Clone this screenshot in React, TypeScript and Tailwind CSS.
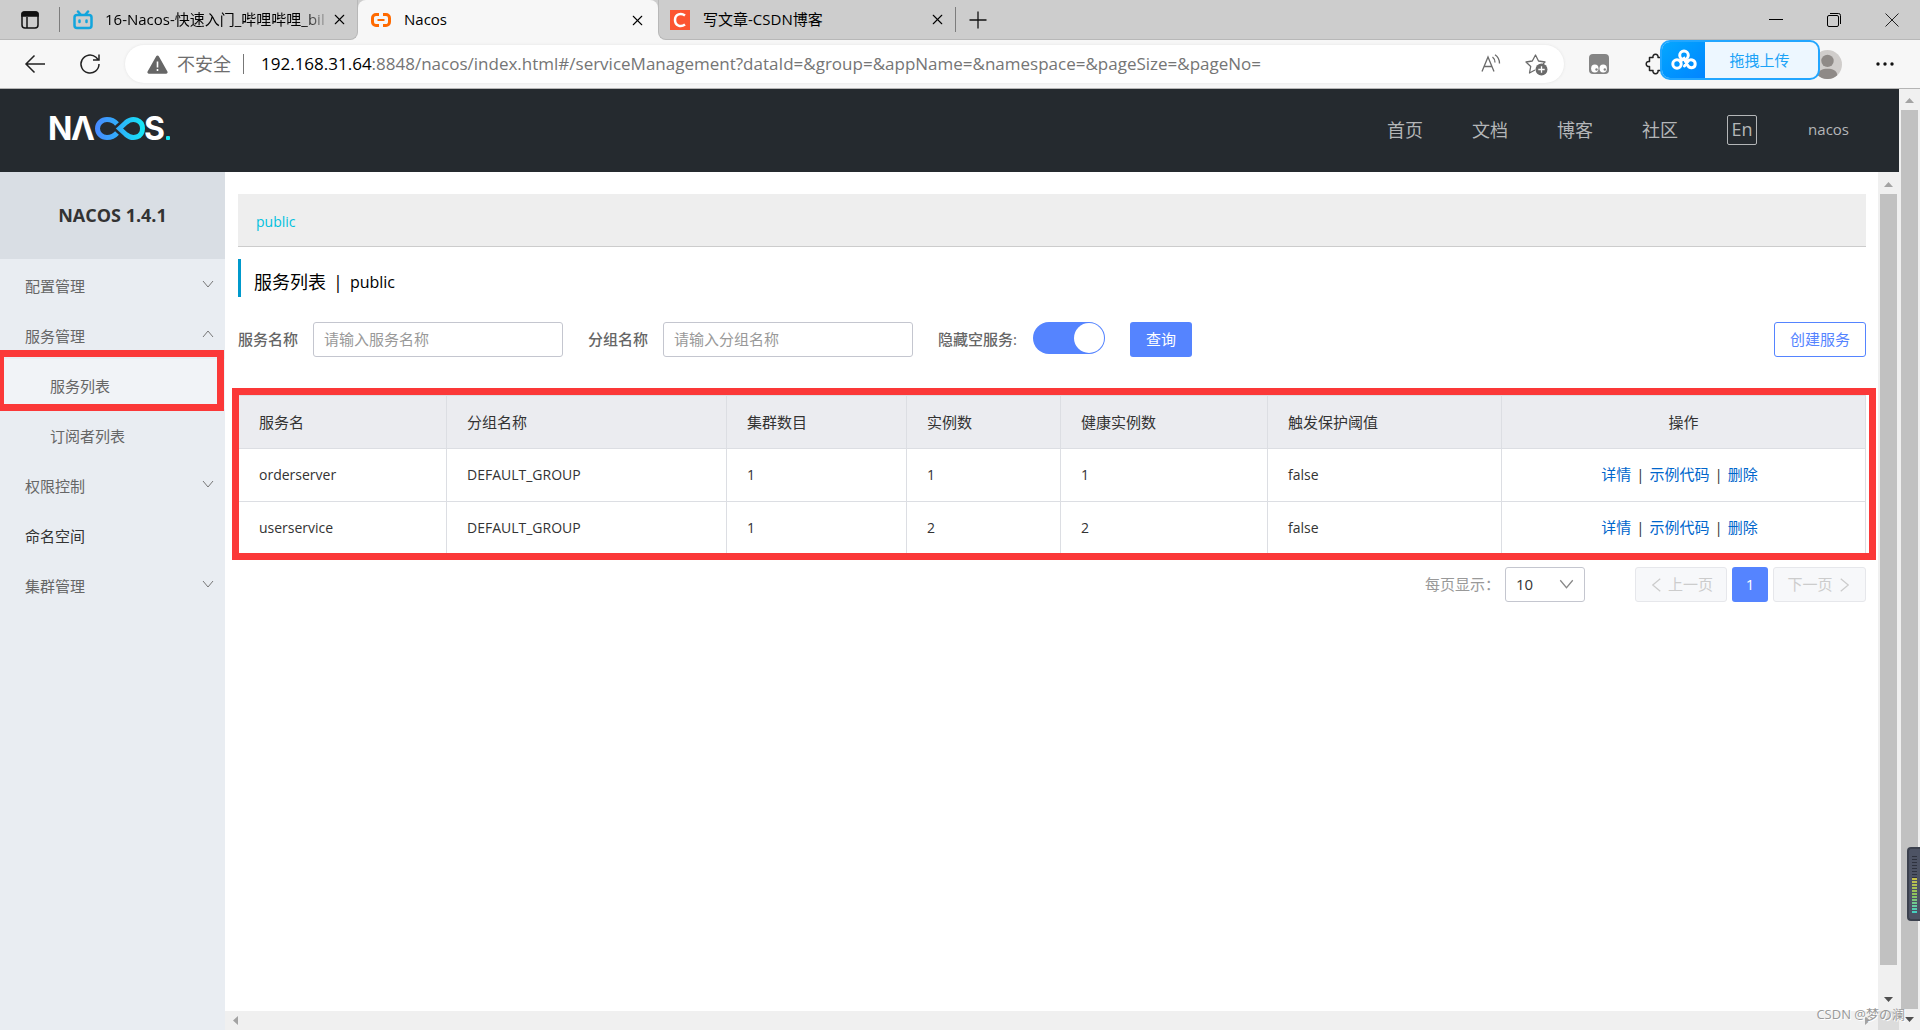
import React, { useState } from "react";
import { LuX } from "react-icons/lu";

const navLinks = ["首页", "文档", "博客", "社区"];

const menu = [
  { label: "配置管理", arrow: "down" },
  { label: "服务管理", arrow: "up" },
  { label: "服务列表", child: true, active: true },
  { label: "订阅者列表", child: true },
  { label: "权限控制", arrow: "down" },
  { label: "命名空间", dark: true },
  { label: "集群管理", arrow: "down" },
];

const services = [
  { name: "orderserver", group: "DEFAULT_GROUP", clusters: 1, instances: 1, healthy: 1, protect: "false" },
  { name: "userservice", group: "DEFAULT_GROUP", clusters: 1, instances: 2, healthy: 2, protect: "false" },
];

const columns = [
  { title: "服务名", width: "w-[208px]" },
  { title: "分组名称", width: "w-[280px]" },
  { title: "集群数目", width: "w-[180px]" },
  { title: "实例数", width: "w-[154px]" },
  { title: "健康实例数", width: "w-[207px]" },
  { title: "触发保护阈值", width: "w-[234px]" },
  { title: "操作", width: "" },
];

const Chevron = ({ className = "" }: { className?: string }) => (
  <svg viewBox="0 0 12 8" className={className} fill="none" stroke="currentColor" strokeWidth="1">
    <path d="M1 1 6 7 11 1" />
  </svg>
);

const Triangle = ({ className = "" }: { className?: string }) => (
  <svg viewBox="0 0 9 5" className={`h-[5px] w-[9px] ${className}`} fill="currentColor">
    <path d="M0 5 4.500 0 9 5z" />
  </svg>
);

const NacosLogo = () => (
  <svg width="122" height="26" viewBox="0 0 122 26" className="overflow-visible" aria-label="NACOS">
    <defs>
      <linearGradient id="loop" gradientUnits="userSpaceOnUse" x1="44" y1="0" x2="94" y2="0">
        <stop offset="0" stopColor="#4a86ff" />
        <stop offset="0.5" stopColor="#2fb0fb" />
        <stop offset="1" stopColor="#14e6f5" />
      </linearGradient>
    </defs>
    <g fill="#fff" fontFamily="Inter, sans-serif" fontWeight="700" fontSize="32">
      <text x="-2" y="24">N</text>
      <text x="21" y="24">Λ</text>
      <text x="94" y="24">S</text>
    </g>
    <g fill="none" stroke="url(#loop)" strokeWidth="5">
      <path d="M67 8C64 4.500 60 3.500 57 3.500A9.500 9 0 0 0 57 21.500C60 21.500 64 20.500 67 17" />
      <path d="M69.500 12.500 76 6.500C83 .5 92.500 4 92.500 12.500S83 24.500 76 18.500z" />
    </g>
    <rect x="116" y="20" width="4" height="4" rx="1" fill="#14e6f5" />
  </svg>
);

const BrowserTabs = () => (
  <div className="flex h-10 shrink-0 bg-[#f7f7f7] text-[15px] text-black">
    <div className="flex w-[358px] items-center rounded-br-lg border-r border-b border-[#b8b8b8] bg-[#cdcdcd] pl-[21px]">
      <button aria-label="Tab actions">
        <svg width="18" height="18" viewBox="0 0 18 18" fill="none" stroke="#111" strokeWidth="1.500">
          <rect x="1" y="1" width="16" height="16" rx="3" />
          <path d="M1 3a2 2 0 0 1 2-2h12a2 2 0 0 1 2 2v2H1z" fill="#111" />
          <path d="M6 6v11" />
        </svg>
      </button>
      <span className="ml-5 h-[25px] w-px bg-[#7d7d7d]" />
      <svg className="ml-[13px] shrink-0" width="20" height="20" viewBox="0 0 20 20" fill="none" stroke="#12a5dd" strokeWidth="2.500" strokeLinecap="round">
        <rect x="1.500" y="5" width="17" height="13" rx="2.500" />
        <path d="m5 1.500 2.500 3M15 1.500l-2.500 3M6.500 10.500v1.500M13.500 10.500v1.500" />
      </svg>
      <span className="ml-3 flex-1 whitespace-nowrap [mask-image:linear-gradient(to_right,#000_88%,transparent)]">
        16-Nacos-快速入门_哔哩哔哩_bil
      </span>
      <button aria-label="Close tab" className="mr-[9px]">
        <LuX size={17} strokeWidth={1.5} />
      </button>
    </div>
    <div className="w-[300px] bg-[#cdcdcd]">
      <div className="flex h-full items-center rounded-t-lg bg-[#f7f7f7] pr-3 pl-[13px]">
        <svg width="20" height="14" viewBox="0 0 20 14" fill="none" stroke="#ff6a00" strokeWidth="3">
          <path d="M8 1.500H5A3.500 3.500 0 0 0 1.500 5v4A3.500 3.500 0 0 0 5 12.500h3M12 1.500h3A3.500 3.500 0 0 1 18.500 5v4a3.500 3.500 0 0 1-3.500 3.500h-3" />
          <path d="M6.500 7h7" strokeWidth="2" />
        </svg>
        <span className="ml-[13px] flex-1 pb-px">Nacos</span>
        <button aria-label="Close tab">
          <LuX size={17} strokeWidth={1.5} />
        </button>
      </div>
    </div>
    <div className="flex flex-1 items-center rounded-bl-lg border-b border-l border-[#b8b8b8] bg-[#cdcdcd] pl-[11px]">
      <svg width="20" height="20" viewBox="0 0 20 20">
        <path d="M0 0h20v20H0z" fill="#fc5531" />
        <path d="M15 5.500C11 2.500 5 4 5 10s6 7.500 10 4.500" fill="none" stroke="#fff" strokeWidth="2.500" />
      </svg>
      <span className="ml-[13px] w-[226px]">写文章-CSDN博客</span>
      <button aria-label="Close tab">
        <LuX size={17} strokeWidth={1.5} />
      </button>
      <span className="ml-[9px] h-[25px] w-px bg-[#7d7d7d]" />
      <button aria-label="New tab" className="ml-3">
        <svg width="20" height="20" viewBox="0 0 20 20" stroke="#111" strokeWidth="1.300">
          <path d="M10 1.500v17M1.500 10h17" />
        </svg>
      </button>
      <div className="ml-auto flex items-center gap-11 pr-[21px]">
        <button aria-label="Minimize">
          <svg width="14" height="14" viewBox="0 0 14 14" stroke="#000">
            <path d="M0 6.500h14" />
          </svg>
        </button>
        <button aria-label="Restore">
          <svg width="14" height="14" viewBox="0 0 14 14" fill="none" stroke="#000">
            <rect x=".5" y="2.500" width="11" height="11" rx="1.500" />
            <path d="M3 .5h8.500a2 2 0 0 1 2 2V11" />
          </svg>
        </button>
        <button aria-label="Close">
          <svg width="14" height="14" viewBox="0 0 14 14" stroke="#222">
            <path d="m.5.5 13 13M13.500.5l-13 13" />
          </svg>
        </button>
      </div>
    </div>
  </div>
);

const UploadBadge = () => (
  <button className="absolute top-0 right-[100px] flex h-10 w-40 overflow-hidden rounded-[10px] border-2 border-[#22a6ff] bg-[#edf7ff] text-[15px] text-[#1ba3f7]">
    <span className="flex h-full w-[43px] items-center justify-center bg-linear-to-br from-[#06a7ff] to-[#0484ff] pb-px">
      <svg width="26" height="22" viewBox="0 0 26 22" fill="none" stroke="#fff" strokeWidth="3" strokeLinecap="round">
        <circle cx="13" cy="6.300" r="4.300" />
        <circle cx="6" cy="15" r="4.200" />
        <path d="M9.200 12.300 13 9.500l3.500 6.500c1.300 3.500 7.700 4 7.700-1 0-4.500-5.500-5.500-7.700-2.200L13.500 17" />
      </svg>
    </span>
    <span className="flex h-full flex-1 items-center justify-center pr-1">拖拽上传</span>
  </button>
);

const AddressBar = () => (
  <div className="relative flex h-[49px] shrink-0 items-center border-b border-[#b5b5b5] bg-[#f7f7f7] pl-6">
    <button aria-label="Back">
      <svg width="22" height="20" viewBox="0 0 22 20" fill="none" stroke="#222" strokeWidth="1.500">
        <path d="M21 10H2M10.500 1.500 2 10l8.500 8.500" />
      </svg>
    </button>
    <button aria-label="Refresh" className="ml-[33px]">
      <svg width="22" height="22" viewBox="0 0 22 22" fill="none" stroke="#222" strokeWidth="1.500">
        <path d="M20 11a9 9 0 1 1-3-6.700L19.500 7M20 1.500V7h-6" />
      </svg>
    </button>
    <div className="ml-6 flex h-[38px] flex-1 items-center rounded-full bg-white pr-4 pl-[22px] text-[17px] shadow-[0_0_3px_#e2e2e2]">
      <svg width="21" height="19" viewBox="0 0 21 19">
        <path d="M9.200 1.200a1.500 1.500 0 0 1 2.600 0l8.600 15.300a1.500 1.500 0 0 1-1.300 2.200H1.900A1.500 1.500 0 0 1 .6 16.500z" fill="#666" />
        <path d="M10.500 6.500v6M10.500 14v2" stroke="#fff" strokeWidth="1.600" />
      </svg>
      <span className="ml-[9px] text-lg text-[#6e6e6e]">不安全</span>
      <span className="ml-3 h-5 w-px bg-[#777]" />
      <span className="ml-[17px] flex-1 whitespace-nowrap text-[#757575]">
        <span className="text-black">192.168.31.64</span>
        :8848/nacos/index.html#/serviceManagement?dataId=&amp;group=&amp;appName=&amp;namespace=&amp;pageSize=&amp;pageNo=
      </span>
      <button aria-label="Read aloud">
        <svg width="20" height="20" viewBox="0 0 20 20" fill="none" stroke="#6b6b6b" strokeWidth="1.300">
          <path d="M1 17.500 7 3l6 14.500M3.200 12.500h7.600M11.500 3c1.700 1.300 2.500 3 2.500 5.500M14 .8c3 2 4.500 5 4.500 8.700" />
        </svg>
      </button>
      <button aria-label="Add to favorites" className="ml-6">
        <svg width="23" height="23" viewBox="0 0 23 23" fill="none" stroke="#6b6b6b" strokeWidth="1.300" strokeLinejoin="round">
          <path d="m10 17-5.500 3 1.200-6.500L1 9l6.300-1L10.500 2l3 6 6.500 1-2 2" />
          <circle cx="16.500" cy="16.500" r="6" fill="#6b6b6b" stroke="none" />
          <path d="M16.500 13.300v6.400M13.300 16.500h6.400" stroke="#fff" />
        </svg>
      </button>
    </div>
    <div className="flex w-[356px] items-center pr-[26px] pl-[25px]">
      <button aria-label="Extension">
        <svg width="20" height="20" viewBox="0 0 20 20">
          <rect width="20" height="20" rx="4" fill="#858585" />
          <ellipse cx="5.800" cy="14.500" rx="3.700" ry="4" fill="#fff" />
          <ellipse cx="14.200" cy="14.500" rx="3.700" ry="4" fill="#fff" />
          <circle cx="7.500" cy="15.500" r="1.200" fill="#858585" />
          <circle cx="15.800" cy="15.500" r="1.200" fill="#858585" />
        </svg>
      </button>
      <button aria-label="Extensions" className="ml-9">
        <svg width="22" height="22" viewBox="0 0 22 22" fill="none" stroke="#222" strokeWidth="1.500" strokeLinejoin="round">
          <path d="M4.500 4.500H8a2.600 2.600 0 1 1 5 0h4.500V9a2.300 2.300 0 0 0 0 4.500v4H13a2.600 2.600 0 1 1-5 0H4.500V13.500a2.600 2.600 0 1 1 0-5z" />
        </svg>
      </button>
      <svg className="ml-auto" width="29" height="29" viewBox="0 0 28 28">
        <circle cx="14" cy="14" r="14" fill="#d0cdcb" />
        <circle cx="14" cy="10.500" r="6" fill="#8f8a87" />
        <path d="M4.500 24.300C5 19.500 9 18 14 18s9 1.500 9.500 6.300A14 14 0 0 1 4.500 24.300z" fill="#8f8a87" />
      </svg>
      <button aria-label="Settings and more" className="ml-[34px]">
        <svg width="18" height="4" viewBox="0 0 18 4" fill="#111">
          <circle cx="2" cy="2" r="1.700" />
          <circle cx="9" cy="2" r="1.700" />
          <circle cx="16" cy="2" r="1.700" />
        </svg>
      </button>
    </div>
    <UploadBadge />
  </div>
);

const Header = () => (
  <header className="flex h-[83px] shrink-0 items-center justify-between bg-[#252a2f] px-[50px] pb-0.5 text-[#b4b6b8]">
    <a href="#" className="pb-0.5">
      <NacosLogo />
    </a>
    <nav className="flex items-center gap-[49px] text-lg">
      {navLinks.map((link) => (
        <a key={link} href="#">
          {link}
        </a>
      ))}
      <button className="flex size-[30px] items-center justify-center rounded-xs border border-[#b4b6b8] pb-0.5">
        En
      </button>
      <a href="#" className="pl-0.5 text-[15px]">
        nacos
      </a>
    </nav>
  </header>
);

const Sidebar = () => (
  <aside className="w-[225px] shrink-0 bg-[#e9edf2] text-[15px]">
    <h1 className="flex h-[87px] items-center justify-center bg-[#d9dee4] pb-0.5 text-lg font-bold text-[#333]">
      NACOS 1.4.1
    </h1>
    <nav>
      {menu.map((item) => (
        <a
          key={item.label}
          href="#"
          className={`relative flex h-[50px] items-center justify-between pt-1 pr-[11px] ${item.child ? "pl-[50px]" : "pl-[25px]"} ${
            item.active ? "bg-[#f1f3f7]" : ""
          } ${item.dark ? "text-[#333]" : "text-[#666]"}`}
        >
          {item.label}
          {item.arrow && (
            <Chevron className={`mb-1 h-2 w-3 text-[#777] ${item.arrow === "up" ? "rotate-180" : ""}`} />
          )}
          {item.active && (
            <span className="absolute -top-[9px] right-px -bottom-0.5 -left-[3px] border-7 border-[#fb3838]" />
          )}
        </a>
      ))}
    </nav>
  </aside>
);

const SearchForm = () => {
  const [hideEmpty, setHideEmpty] = useState(true);

  return (
    <form className="mt-[25px] flex h-[35px] items-center text-[15px] whitespace-nowrap text-[#666]">
      <label htmlFor="service" className="font-medium">
        服务名称
      </label>
      <input
        id="service"
        placeholder="请输入服务名称"
        className="mr-[25px] ml-[15px] h-[35px] w-[250px] rounded-[3px] border border-[#c4c6cf] px-[10px] pb-0.5 placeholder:text-[#999]"
      />
      <label htmlFor="group" className="font-medium">
        分组名称
      </label>
      <input
        id="group"
        placeholder="请输入分组名称"
        className="mr-[25px] ml-[15px] h-[35px] w-[250px] rounded-[3px] border border-[#c4c6cf] px-[10px] pb-0.5 placeholder:text-[#999]"
      />
      <label htmlFor="hide-empty" className="font-medium">
        隐藏空服务:
      </label>
      <input
        id="hide-empty"
        type="checkbox"
        checked={hideEmpty}
        onChange={(e) => setHideEmpty(e.target.checked)}
        className="mr-[25px] ml-4 flex h-8 w-[72px] appearance-none items-center self-start rounded-full bg-[#ccc] p-px before:size-[30px] before:rounded-full before:bg-white checked:justify-end checked:bg-[#5584ff]"
      />
      <button type="button" className="h-[35px] rounded-[3px] bg-[#5584ff] px-4 text-white">
        查询
      </button>
      <button type="button" className="ml-auto h-[35px] rounded-[3px] border border-[#5584ff] px-[15px] text-[#5584ff]">
        创建服务
      </button>
    </form>
  );
};

const ServiceTable = () => (
  <div className="relative mt-[38px]">
    <table className="w-full table-fixed border-collapse text-left text-[15px] text-[#333]">
      <thead className="bg-[#ebecf0]">
        <tr className="h-[53px]">
          {columns.map((col, i) => (
            <th
              key={col.title}
              className={`border border-[#dcdee3] px-5 font-normal ${col.width} ${i === 6 ? "text-center" : ""}`}
            >
              {col.title}
            </th>
          ))}
        </tr>
      </thead>
      <tbody>
        {services.map((s) => (
          <tr key={s.name} className="h-[53px]">
            {Object.values(s).map((value, i) => (
              <td key={i} className="border border-[#dcdee3] px-5 text-sm">
                {value}
              </td>
            ))}
            <td className="border border-[#dcdee3] pr-6 pb-0.5 pl-4 text-center">
              <a href="#" className="text-[#06c]">详情</a>
              <span className="mx-[5px]">|</span>
              <a href="#" className="text-[#06c]">示例代码</a>
              <span className="mx-[5px]">|</span>
              <a href="#" className="text-[#06c]">删除</a>
            </td>
          </tr>
        ))}
      </tbody>
    </table>
    <span className="pointer-events-none absolute -top-[7px] -right-[10px] -bottom-[5px] -left-1.5 border-7 border-[#fb3838]" />
  </div>
);

const Pagination = () => (
  <div className="mt-3 flex items-center justify-end text-[15px]">
    <label htmlFor="page-size" className="mr-[5px] text-[#999]">
      每页显示：
    </label>
    <div className="relative mr-[50px]">
      <select
        id="page-size"
        className="h-[35px] w-20 appearance-none rounded-[3px] border border-[#c4c6cf] bg-white pl-[10px] text-[#333]"
      >
        <option>10</option>
        <option>20</option>
      </select>
      <Chevron className="pointer-events-none absolute top-3 right-[11px] h-[10px] w-[15px] text-[#888]" />
    </div>
    <button disabled className="flex h-[35px] w-[92px] items-center justify-center gap-1 rounded-[3px] border border-[#e6e7eb] bg-[#f7f8fa] text-[#ccc]">
      <Chevron className="h-[10px] w-[15px] rotate-90" />
      上一页
    </button>
    <button className="mx-[5px] h-[35px] w-9 rounded-[3px] bg-[#5584ff] text-white">1</button>
    <button disabled className="flex h-[35px] w-[93px] items-center justify-center gap-1 rounded-[3px] border border-[#e6e7eb] bg-[#f7f8fa] text-[#ccc]">
      下一页
      <Chevron className="h-[10px] w-[15px] -rotate-90" />
    </button>
  </div>
);

const ScrollY = ({ className = "" }: { className?: string }) => (
  <div className={`flex w-[21px] shrink-0 flex-col items-center bg-[#f0f0f0] ${className}`}>
    <Triangle className="mt-[9px] mb-[7px] text-[#a3a3a3]" />
    <div className="w-[17px] flex-1 bg-[#c1c1c1]" />
  </div>
);

const Meter = () => (
  <div className="absolute right-0 bottom-[109px] h-[74px] w-[13px] rounded-l-[4px] border-2 border-r-0 border-[#3b404d] bg-[#4d5364] py-[7px] pl-[3px]">
    <div className="h-[22px] w-[5px] bg-[repeating-linear-gradient(#2e323e_0_1px,#4d5364_1px_3px)]" />
    <div className="h-[35px] w-[5px] bg-linear-to-b from-[#c9c04a] via-[#8ac45c] to-[#3fd0c4]">
      <div className="h-full bg-[repeating-linear-gradient(transparent_0_2px,#4d5364_2px_3px)]" />
    </div>
  </div>
);

export default function App() {
  return (
    <div className="relative flex h-screen flex-col overflow-hidden bg-white font-['Open_Sans','Noto_Sans_CJK_SC',sans-serif]">
      <BrowserTabs />
      <AddressBar />
      <div className="flex min-h-0 flex-1">
        <div className="flex min-w-0 flex-1 flex-col">
          <Header />
          <div className="flex min-h-0 flex-1">
            <Sidebar />
            <div className="flex min-w-0 flex-1 flex-col">
              <div className="flex min-h-0 flex-1">
                <main className="min-w-0 flex-1 pt-[22px] pr-3 pl-[13px]">
                  <div className="flex h-[53px] items-center border-b border-[#ccc] bg-[#eee] px-[18px] pt-1">
                    <a href="#" className="text-sm text-[#00c1de]">
                      public
                    </a>
                  </div>
                  <h2 className="mt-3 flex h-[38px] items-center border-l-3 border-[#09c] pt-2 pl-[13px] text-lg text-black">
                    服务列表
                    <span className="mx-[7px]">|</span>
                    <span className="text-base">public</span>
                  </h2>
                  <SearchForm />
                  <ServiceTable />
                  <Pagination />
                </main>
                <div className="flex flex-col bg-[#f0f0f0]">
                  <ScrollY className="mt-px flex-1" />
                  <Triangle className="mx-auto mt-8 mb-[9px] rotate-180 text-[#505050]" />
                </div>
              </div>
              <div className="flex h-[19px] shrink-0 items-center bg-[#f0f0f0]">
                <Triangle className="ml-1.5 -rotate-90 text-[#a3a3a3]" />
                <Triangle className="mr-1.5 ml-auto rotate-90 text-[#a3a3a3]" />
                <span className="h-full w-[21px] bg-[#dcdcdc]" />
              </div>
            </div>
          </div>
        </div>
        <div className="flex flex-col bg-[#f0f0f0]">
          <ScrollY className="flex-1" />
          <Triangle className="mx-auto mt-2 mb-2 rotate-180 text-[#505050]" />
        </div>
      </div>
      <Meter />
      <span className="absolute right-[15px] bottom-1.5 text-[13px] text-[#999] [text-shadow:1px_1px_0_#fff]">
        CSDN @梦の澜
      </span>
    </div>
  );
}
